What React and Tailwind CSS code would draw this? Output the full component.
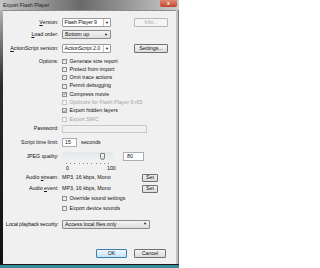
import { useState } from "react";

function Label({ children, className = "" }) {
  return (
    <div className={"w-[56px] shrink-0 whitespace-nowrap text-right pr-[0.5px] " + className}>
      {children}
    </div>
  );
}

function Check({ label, checked, disabled }) {
  return (
    <div className="flex h-[8.3px] items-center">
      <div className="w-[59px] shrink-0" />
      <div
        className={
          "flex h-[5px] w-[5px] items-center justify-center border-[0.6px] " +
          (disabled
            ? "border-[#c4c4c4] bg-[#f6f6f6]"
            : "border-[#8e8f8f] bg-gradient-to-br from-[#dcdcdc] to-[#fafafa]")
        }
      >
        {checked && (
          <svg viewBox="0 0 10 10" className="h-[4.4px] w-[4.4px]">
            <path d="M1.5 5.2 L4 7.8 L8.6 1.8" fill="none" stroke="#1d3b72" strokeWidth="1.8" />
          </svg>
        )}
      </div>
      <span className={"ml-[2.5px] whitespace-nowrap " + (disabled ? "text-[#a3a3a3]" : "")}>{label}</span>
    </div>
  );
}

function ComboBox({ value, width, split }) {
  if (split) {
    return (
      <div
        className="flex h-[9px] items-center rounded-[1px] border-[0.6px] border-[#9a9a9a] bg-white"
        style={{ width }}
      >
        <span className="flex-1 overflow-hidden whitespace-nowrap pl-[1.5px] tracking-[-0.1px]">{value}</span>
        <div className="flex h-full w-[7px] shrink-0 items-center justify-center border-l-[0.6px] border-[#c4c4c4] text-[4px]">
          ▼
        </div>
      </div>
    );
  }
  return (
    <div
      className="flex h-[9px] items-center rounded-[1px] border-[0.6px] border-[#8a8a8a] bg-gradient-to-b from-[#f4f4f4] to-[#dddddd]"
      style={{ width }}
    >
      <span className="flex-1 overflow-hidden whitespace-nowrap pl-[2px]">{value}</span>
      <span className="shrink-0 pr-[2px] text-[4px]">▼</span>
    </div>
  );
}

function Button({ children, className = "" }) {
  return (
    <div
      className={
        "flex items-center justify-center rounded-[1px] border-[0.6px] " + className
      }
    >
      {children}
    </div>
  );
}

export default function App() {
  const [quality] = useState(80);

  return (
    <div className="h-[268px] w-[320px] overflow-hidden bg-white font-['Liberation_Sans',Arial,sans-serif] text-[5.3px] leading-none text-[#111111]">
      <div className="flex h-[268px] w-[179px] flex-col">
        {/* title bar */}
        <div className="flex h-[10px] items-start bg-gradient-to-r from-[#c6c6c6] via-[#6a6a6a] via-45% to-[#cccccc]">
          <span className="pl-[3px] pt-[2.5px] text-[#202020]">Export Flash Player</span>
          <div className="ml-auto mr-[2px] flex h-[7px] w-[17px] items-center justify-center rounded-b-[2px] bg-gradient-to-b from-[#e08a74] to-[#c0432a] text-[5px] font-bold text-white">
            x
          </div>
        </div>

        <div className="flex flex-1">
          <div className="w-[3px] bg-gradient-to-b from-[#b4b4b4] via-[#2a2a2a] via-30% to-[#101010]" />
          <div className="flex flex-1 flex-col border-t-[0.6px] border-[#8c8c8c] bg-[#f0f0f0]">
            {/* Version */}
            <div className="mt-[7px] flex h-[9px] items-center">
              <Label>
                <span className="underline">V</span>ersion:
              </Label>
              <div className="ml-[3px]">
                <ComboBox value="Flash Player 9" width={49} split />
              </div>
              <Button className="ml-[23px] h-[9px] w-[34px] border-[#b5b9bc] bg-[#f4f4f4] text-[#a8a8a8]">
                Info...
              </Button>
            </div>

            {/* Load order */}
            <div className="mt-[3px] flex h-[9px] items-center">
              <Label>
                <span className="underline">L</span>oad order:
              </Label>
              <div className="ml-[3px]">
                <ComboBox value="Bottom up" width={49} />
              </div>
            </div>

            {/* ActionScript */}
            <div className="mt-[5px] flex h-[9px] items-center">
              <Label>
                <span className="underline">A</span>ctionScript version:
              </Label>
              <div className="ml-[3px]">
                <ComboBox value="ActionScript 2.0" width={49} split />
              </div>
              <Button className="ml-[23px] h-[9px] w-[34px] border-[#707070] bg-gradient-to-b from-[#f4f4f4] to-[#dcdcdc]">
                Settings...
              </Button>
            </div>

            {/* Options */}
            <div className="relative mt-[4px]">
              <div className="absolute left-0 top-[1.6px]">
                <Label>Options:</Label>
              </div>
              <Check label="Generate size report" />
              <Check label="Protect from import" />
              <Check label="Omit trace actions" />
              <Check label="Permit debugging" />
              <Check label="Compress movie" checked />
              <Check label="Optimize for Flash Player 6 r65" disabled />
              <Check label="Export hidden layers" checked />
              <Check label="Export SWC" disabled />
            </div>

            {/* Password */}
            <div className="mt-[1.6px] flex h-[8px] items-center">
              <Label>Password:</Label>
              <div className="ml-[3px] h-[8px] w-[85px] border-[0.6px] border-[#c9c9c9] bg-[#f0f0f0]" />
            </div>

            {/* Script time limit */}
            <div className="mt-[5px] flex h-[9px] items-center">
              <Label>Script time limit:</Label>
              <div className="ml-[3px] flex h-[9px] w-[15px] items-center border-[0.6px] border-[#abadb3] bg-white pl-[2px]">
                15
              </div>
              <span className="ml-[4px]">seconds</span>
            </div>

            {/* JPEG quality */}
            <div className="mt-[5px] flex h-[9px] items-center">
              <Label>JPEG quality:</Label>
              <div className="relative ml-[3px] h-[9px] w-[51px] bg-gradient-to-b from-[#e4e8e8] to-[#f0f2f2]">
                <div className="absolute top-[1px] h-[7px] w-[5px] rounded-b-[2.5px] border-[0.6px] border-[#7a7a7a] bg-gradient-to-b from-[#ffffff] to-[#dadada]" style={{ left: 38 }} />
              </div>
              <div className="ml-[10px] flex h-[9px] w-[21px] items-center border-[0.6px] border-[#abadb3] bg-white pl-[3px]">
                {quality}
              </div>
            </div>
            <div className="mt-[2px] flex">
              <div className="w-[63px] shrink-0" />
              <div className="flex w-[43px] justify-between">
                {Array.from({ length: 11 }).map((_, i) => (
                  <div key={i} className="h-[1px] w-[0.6px] bg-[#8a8a8a]" />
                ))}
              </div>
            </div>
            <div className="mt-[2px] flex h-[5px] items-center">
              <div className="w-[63px] shrink-0" />
              <span>0</span>
              <span className="ml-[38px]">100</span>
            </div>

            {/* Audio */}
            <div className="mt-[3px] flex h-[8px] items-center">
              <Label>
                Audio <span className="underline">s</span>tream:
              </Label>
              <span className="ml-[3px] w-[80px] whitespace-nowrap">MP3, 16 kbps, Mono</span>
              <Button className="h-[8px] w-[16px] border-[#707070] bg-gradient-to-b from-[#f4f4f4] to-[#dcdcdc]">
                Set
              </Button>
            </div>
            <div className="mt-[3px] flex h-[8px] items-center">
              <Label>
                Audio <span className="underline">e</span>vent:
              </Label>
              <span className="ml-[3px] w-[80px] whitespace-nowrap">MP3, 16 kbps, Mono</span>
              <Button className="h-[8px] w-[16px] border-[#707070] bg-gradient-to-b from-[#f4f4f4] to-[#dcdcdc]">
                Set
              </Button>
            </div>

            <div className="mt-[1.6px]">
              <Check label="Override sound settings" />
              <div className="h-[1.5px]" />
              <Check label="Export device sounds" />
            </div>

            {/* Local playback */}
            <div className="mt-[7px] flex h-[9px] items-center">
              <Label className="tracking-[-0.15px]">Local playback security:</Label>
              <div className="ml-[3px]">
                <ComboBox value="Access local files only" width={88} />
              </div>
            </div>

            {/* buttons */}
            <div className="mt-[20px] flex h-[9px] items-center">
              <div className="w-[93px] shrink-0" />
              <Button className="h-[9px] w-[31px] border-[#3c7fb1] bg-gradient-to-b from-[#eef7fd] to-[#c4e3f7]">
                OK
              </Button>
              <Button className="ml-[7px] h-[9px] w-[32px] border-[#707070] bg-gradient-to-b from-[#f4f4f4] to-[#dcdcdc]">
                Cancel
              </Button>
            </div>
            <div className="flex-1" />
          </div>
          <div className="w-[3px] border-r-[0.8px] border-[#7a7a7a] bg-[#c2c2c2]" />
        </div>
        <div className="h-[1.5px] bg-[#1a1a1a]" />
        <div className="h-[3px] bg-[#3a8c9c]" />
      </div>
    </div>
  );
}
